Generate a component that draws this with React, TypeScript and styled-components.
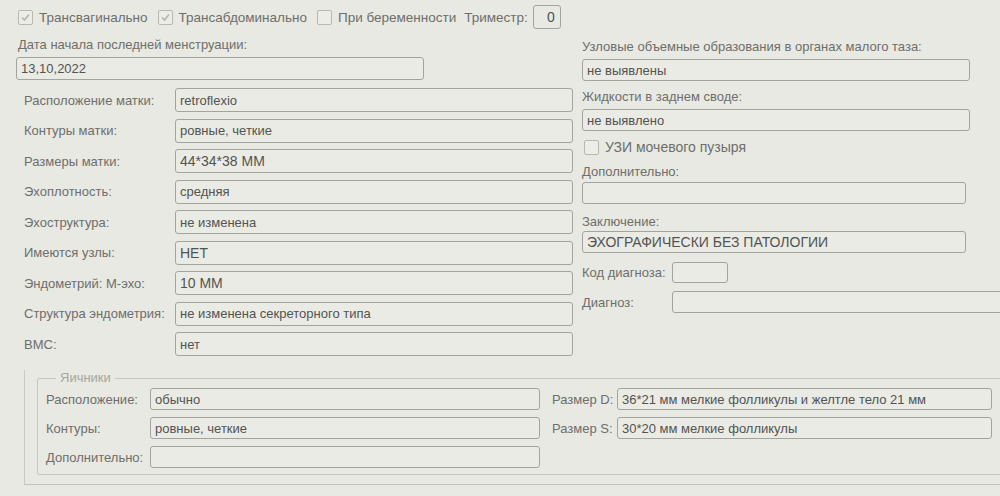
import React from 'react';
import styled, { createGlobalStyle } from 'styled-components';

const GlobalStyle = createGlobalStyle`
    html, body {
        margin: 0;
        padding: 0;
        background: #e8e9e2;
        overflow: hidden;
    }
    body {
        font-family: 'Liberation Sans', Arial, sans-serif;
        font-size: 13px;
        color: #6e6e6c;
    }
`;

const Page = styled.div`
    width: 1000px;
    height: 496px;
    padding-left: 16px;
    box-sizing: border-box;
    overflow: hidden;
`;

const TopRow = styled.div`
    display: flex;
    align-items: center;
    height: 34px;
    padding-left: 2px;
    font-size: 13.5px;
`;

const CheckItem = styled.label`
    display: flex;
    align-items: center;
    gap: 6px;
    margin-right: ${(p: { $gap?: number }) => p.$gap ?? 10}px;
    white-space: nowrap;
`;

const Box = styled.span`
    display: inline-flex;
    align-items: center;
    justify-content: center;
    width: 13px;
    height: 13px;
    border: 1px solid #b7b8b0;
    border-radius: 2px;
    background: #ecede6;
    flex-shrink: 0;
`;

const Trimester = styled.div`
    width: 28px;
    height: 24px;
    margin-left: 5px;
    box-sizing: border-box;
    border: 1px solid #a3a49e;
    border-radius: 3px;
    display: flex;
    align-items: center;
    justify-content: flex-end;
    padding-right: 5px;
    color: #505050;
    font-size: 14px;
`;

const Columns = styled.div`
    display: flex;
    align-items: flex-start;
`;

const LeftCol = styled.div`
    width: 566px;
    flex-shrink: 0;
`;

const RightCol = styled.div`
    display: flex;
    flex-direction: column;
    padding-top: 5px;
`;

const Caption = styled.div<{ $mt?: number; $ml?: number }>`
    line-height: 16px;
    height: 16px;
    margin-top: ${(p) => p.$mt ?? 0}px;
    margin-left: ${(p) => p.$ml ?? 0}px;
    white-space: nowrap;
`;

const TextBox = styled.div<{ $w: number; $h?: number; $mt?: number; $caps?: boolean }>`
    width: ${(p) => p.$w}px;
    height: ${(p) => p.$h ?? 22}px;
    margin-top: ${(p) => p.$mt ?? 0}px;
    box-sizing: border-box;
    border: 1px solid #a3a49e;
    border-radius: 3px;
    background: #eaebe4;
    padding: 0 4px;
    display: flex;
    align-items: center;
    color: #535353;
    font-size: ${(p) => (p.$caps ? 14 : 13)}px;
    white-space: nowrap;
    overflow: hidden;
    flex-shrink: 0;
`;

const Rows = styled.div`
    display: flex;
    flex-direction: column;
    gap: 6.5px;
    margin-top: 8px;
`;

const FormRow = styled.div<{ $mt?: number }>`
    display: flex;
    align-items: center;
    margin-top: ${(p) => p.$mt ?? 0}px;
`;

const RowLabel = styled.div<{ $w: number; $pl?: number }>`
    width: ${(p) => p.$w}px;
    padding-left: ${(p) => p.$pl ?? 0}px;
    box-sizing: border-box;
    white-space: nowrap;
    flex-shrink: 0;
`;

const CheckRow = styled.div`
    display: flex;
    align-items: center;
    gap: 6px;
    height: 16px;
    margin-top: 8px;
    padding-left: 2px;
    font-size: 14px;
`;

const Frame = styled.div`
    margin: 4px 0 0 8px;
    padding: 0 0 9px 12px;
    border-left: 1px solid #c9cac3;
    border-bottom: 1px solid #c2c3bc;
    width: 1000px;
`;

const GroupBox = styled.fieldset`
    margin: 14px 0 0 0;
    padding: 2px 0 6px 8px;
    min-width: 0;
    border: 1px solid #c6c7c0;
    border-radius: 2px;
    width: 1000px;
    box-sizing: border-box;
`;

const Legend = styled.legend`
    margin-left: 10px;
    padding: 0 4px;
    line-height: 16px;
    color: #a5a6a0;
`;

const OvaryGrid = styled.div`
    display: grid;
    grid-template-columns: 104px 390px 77px 375px;
    row-gap: 7px;
    align-items: center;
`;

const CheckMark = () => (
    <svg width="11" height="11" viewBox="0 0 11 11">
        <polyline points="2,5.5 4.5,8 9,2.5" fill="none" stroke="#b4b5ad" strokeWidth="1.6" />
    </svg>
);

const uterus: [string, string][] = [
    ['Расположение матки:', 'retroflexio'],
    ['Контуры матки:', 'ровные, четкие'],
    ['Размеры матки:', '44*34*38 ММ'],
    ['Эхоплотность:', 'средняя'],
    ['Эхоструктура:', 'не изменена'],
    ['Имеются узлы:', 'НЕТ'],
    ['Эндометрий: М-эхо:', '10 ММ'],
    ['Структура эндометрия:', 'не изменена секреторного типа'],
    ['ВМС:', 'нет'],
];

export default function App() {
    return (
        <>
            <GlobalStyle />
            <Page>
                <TopRow>
                    <CheckItem>
                        <Box><CheckMark /></Box>
                        Трансвагинально
                    </CheckItem>
                    <CheckItem>
                        <Box><CheckMark /></Box>
                        Трансабдоминально
                    </CheckItem>
                    <CheckItem $gap={8}>
                        <Box />
                        При беременности
                    </CheckItem>
                    <span>Триместр:</span>
                    <Trimester>0</Trimester>
                </TopRow>

                <Columns>
                    <LeftCol>
                        <Caption $mt={3} $ml={2}>Дата начала последней менструации:</Caption>
                        <TextBox $w={408} $h={23} $mt={4}>13,10,2022</TextBox>
                        <Rows>
                            {uterus.map(([label, value]) => (
                                <FormRow key={label}>
                                    <RowLabel $w={159} $pl={8}>{label}</RowLabel>
                                    <TextBox $w={398} $h={24} $caps={/[А-Я0-9]{2}/.test(value)}>
                                        {value}
                                    </TextBox>
                                </FormRow>
                            ))}
                        </Rows>
                    </LeftCol>

                    <RightCol>
                        <Caption>Узловые объемные образования в органах малого таза:</Caption>
                        <TextBox $w={388} $mt={4}>не выявлены</TextBox>
                        <Caption $mt={8}>Жидкости в заднем своде:</Caption>
                        <TextBox $w={388} $mt={4}>не выявлено</TextBox>
                        <CheckRow>
                            <Box />
                            УЗИ мочевого пузыря
                        </CheckRow>
                        <Caption $mt={9}>Дополнительно:</Caption>
                        <TextBox $w={384} $mt={2} />
                        <Caption $mt={10}>Заключение:</Caption>
                        <TextBox $w={384} $mt={1} $caps>ЭХОГРАФИЧЕСКИ БЕЗ ПАТОЛОГИИ</TextBox>
                        <FormRow $mt={9}>
                            <RowLabel $w={90}>Код диагноза:</RowLabel>
                            <TextBox $w={56} $h={21} />
                        </FormRow>
                        <FormRow $mt={8}>
                            <RowLabel $w={90}>Диагноз:</RowLabel>
                            <TextBox $w={340} />
                        </FormRow>
                    </RightCol>
                </Columns>

                <Frame>
                    <GroupBox>
                        <Legend>Яичники</Legend>
                        <OvaryGrid>
                            <RowLabel $w={104}>Расположение:</RowLabel>
                            <TextBox $w={390}>обычно</TextBox>
                            <RowLabel $w={77} $pl={12}>Размер D:</RowLabel>
                            <TextBox $w={375}>36*21 мм мелкие фолликулы и желтле тело 21 мм</TextBox>

                            <RowLabel $w={104}>Контуры:</RowLabel>
                            <TextBox $w={390}>ровные, четкие</TextBox>
                            <RowLabel $w={77} $pl={12}>Размер S:</RowLabel>
                            <TextBox $w={375}>30*20 мм мелкие фолликулы</TextBox>

                            <RowLabel $w={104}>Дополнительно:</RowLabel>
                            <TextBox $w={390} />
                        </OvaryGrid>
                    </GroupBox>
                </Frame>
            </Page>
        </>
    );
}
